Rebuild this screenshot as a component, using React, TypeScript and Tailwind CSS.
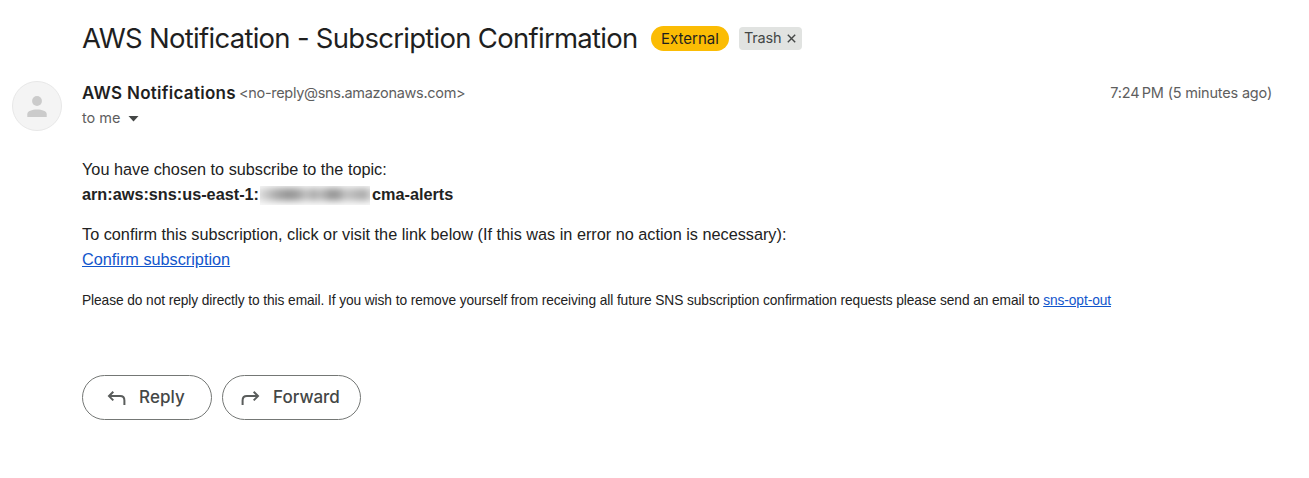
function ReplyArrow({ className = "" }: { className?: string }) {
  return (
    <svg
      className={className}
      width="20"
      height="16"
      viewBox="0 0 20 16"
      fill="none"
      stroke="#5a5d5c"
      strokeWidth="2"
    >
      <path d="M6.300 1.800 2 6.100l4.300 4.300M2 6.100h11.100c2.700 0 4.300 1.700 4.300 4.400V15" />
    </svg>
  );
}

function Avatar() {
  return (
    <div className="flex h-[50px] w-[50px] shrink-0 items-center justify-center rounded-full border border-[#e8e8e8] bg-[#f4f4f4]">
      <svg width="20" height="22" viewBox="0 0 20 22" fill="#cbcbcb">
        <circle cx="10" cy="6" r="4.9" />
        <path d="M.3 22v-2.800c0-3.200 4.800-4.700 9.700-4.700s9.700 1.500 9.700 4.700V22z" />
      </svg>
    </div>
  );
}

export default function App() {
  return (
    <main className="h-[478px] w-full overflow-hidden bg-white font-['Inter',sans-serif] text-[#1f1f1f]">
      <header className="flex h-[76px] items-center pl-[82px]">
        <h1 className="w-[569px] shrink-0 whitespace-nowrap text-[27.5px] leading-9 tracking-[-0.72px]">
          AWS Notification - Subscription Confirmation
        </h1>
        <span className="flex h-[25px] w-[78px] items-center justify-center rounded-full bg-[#fbbc04] pt-0.5 text-[15px]">
          External
        </span>
        <span className="ml-[10px] flex h-[23px] w-[63px] items-center rounded bg-[#e1e3e1] pl-[5px] text-[14.5px] tracking-[-0.2px] text-[#444746]">
          <span className="w-[43px]">Trash</span>
          <svg className="mt-px" width="9" height="9" viewBox="0 0 9 9" stroke="#444746" strokeWidth="1.4">
            <path d="m.8.8 7.400 7.400M8.200.8.8 8.200" />
          </svg>
        </span>
      </header>

      <section className="flex pl-3 pr-[37px] pt-[5px]">
        <Avatar />
        <div className="ml-5 flex-1">
          <div className="flex h-6 items-center whitespace-nowrap">
            <span className="w-[157px] pt-0.5 text-[17px] font-semibold tracking-[0.28px]">
              AWS Notifications
            </span>
            <span className="text-[14.5px] tracking-[-0.31px] text-[#5e5e5e]">
              &lt;no-reply@sns.amazonaws.com&gt;
            </span>
            <time className="ml-auto text-[14.5px] tracking-[-0.19px] text-[#5e5e5e]">
              7:24&#8239;PM (5 minutes ago)
            </time>
          </div>
          <div className="flex h-[26px] items-center text-[14.5px] text-[#5e5e5e]">
            <span className="w-[46px]">to me</span>
            <svg className="mt-px" width="11" height="6" viewBox="0 0 11 6" fill="#444746">
              <path d="M.5 0h10l-5 5.500z" />
            </svg>
          </div>
        </div>
      </section>

      <article className="whitespace-nowrap pl-[82px] pt-[26px] font-['Liberation_Sans',Arial,sans-serif] text-[16.25px] leading-[25px] text-[#222]">
        <p>You have chosen to subscribe to the topic:</p>
        <p className="flex items-center font-bold">
          <span className="w-[178px]">arn:aws:sns:us-east-1:</span>
          <span className="mr-0.5 mt-0.5 flex h-[19px] w-[110px] items-center overflow-hidden bg-[#fafafa]">
            <span className="-mx-1 -mt-0.5 flex h-[13px] w-[118px] shrink-0 bg-[linear-gradient(90deg,#e8e8e8_0%,#c4c4c4_10%,#a8a8a8_18%,#959595_28%,#a0a0a0_35%,#c4c4c4_43%,#aaa_49%,#c0c0c0_54%,#999_63%,#999_69%,#c4c4c4_76%,#b8b8b8_84%,#aaa_91%,#ddd_100%)] blur-[3px]" />
          </span>
          <span>cma-alerts</span>
        </p>
        <p className="mt-[15px]">
          To confirm this subscription, click or visit the link below (If this was in error no action is necessary):
        </p>
        <p>
          <a href="#confirm" className="text-[#1155cc] underline">Confirm subscription</a>
        </p>
        <p className="mt-4 text-[13.75px] tracking-[-0.09px]">
          Please do not reply directly to this email. If you wish to remove yourself from receiving all future SNS subscription confirmation requests please send an email to{" "}
          <a href="#opt-out" className="text-[#1155cc] underline">sns-opt-out</a>
        </p>
      </article>

      <footer className="mt-[62px] flex gap-[10px] pl-[82px] text-[17px] font-medium text-[#444746]">
        <button className="flex h-[45px] w-[130px] items-center rounded-full border border-[#747775] pl-6">
          <ReplyArrow />
          <span className="ml-3 tracking-[0.1px]">Reply</span>
        </button>
        <button className="flex h-[45px] w-[139px] items-center rounded-full border border-[#747775] pl-[17px]">
          <ReplyArrow className="-scale-x-100" />
          <span className="ml-[13px]">Forward</span>
        </button>
      </footer>
    </main>
  );
}
